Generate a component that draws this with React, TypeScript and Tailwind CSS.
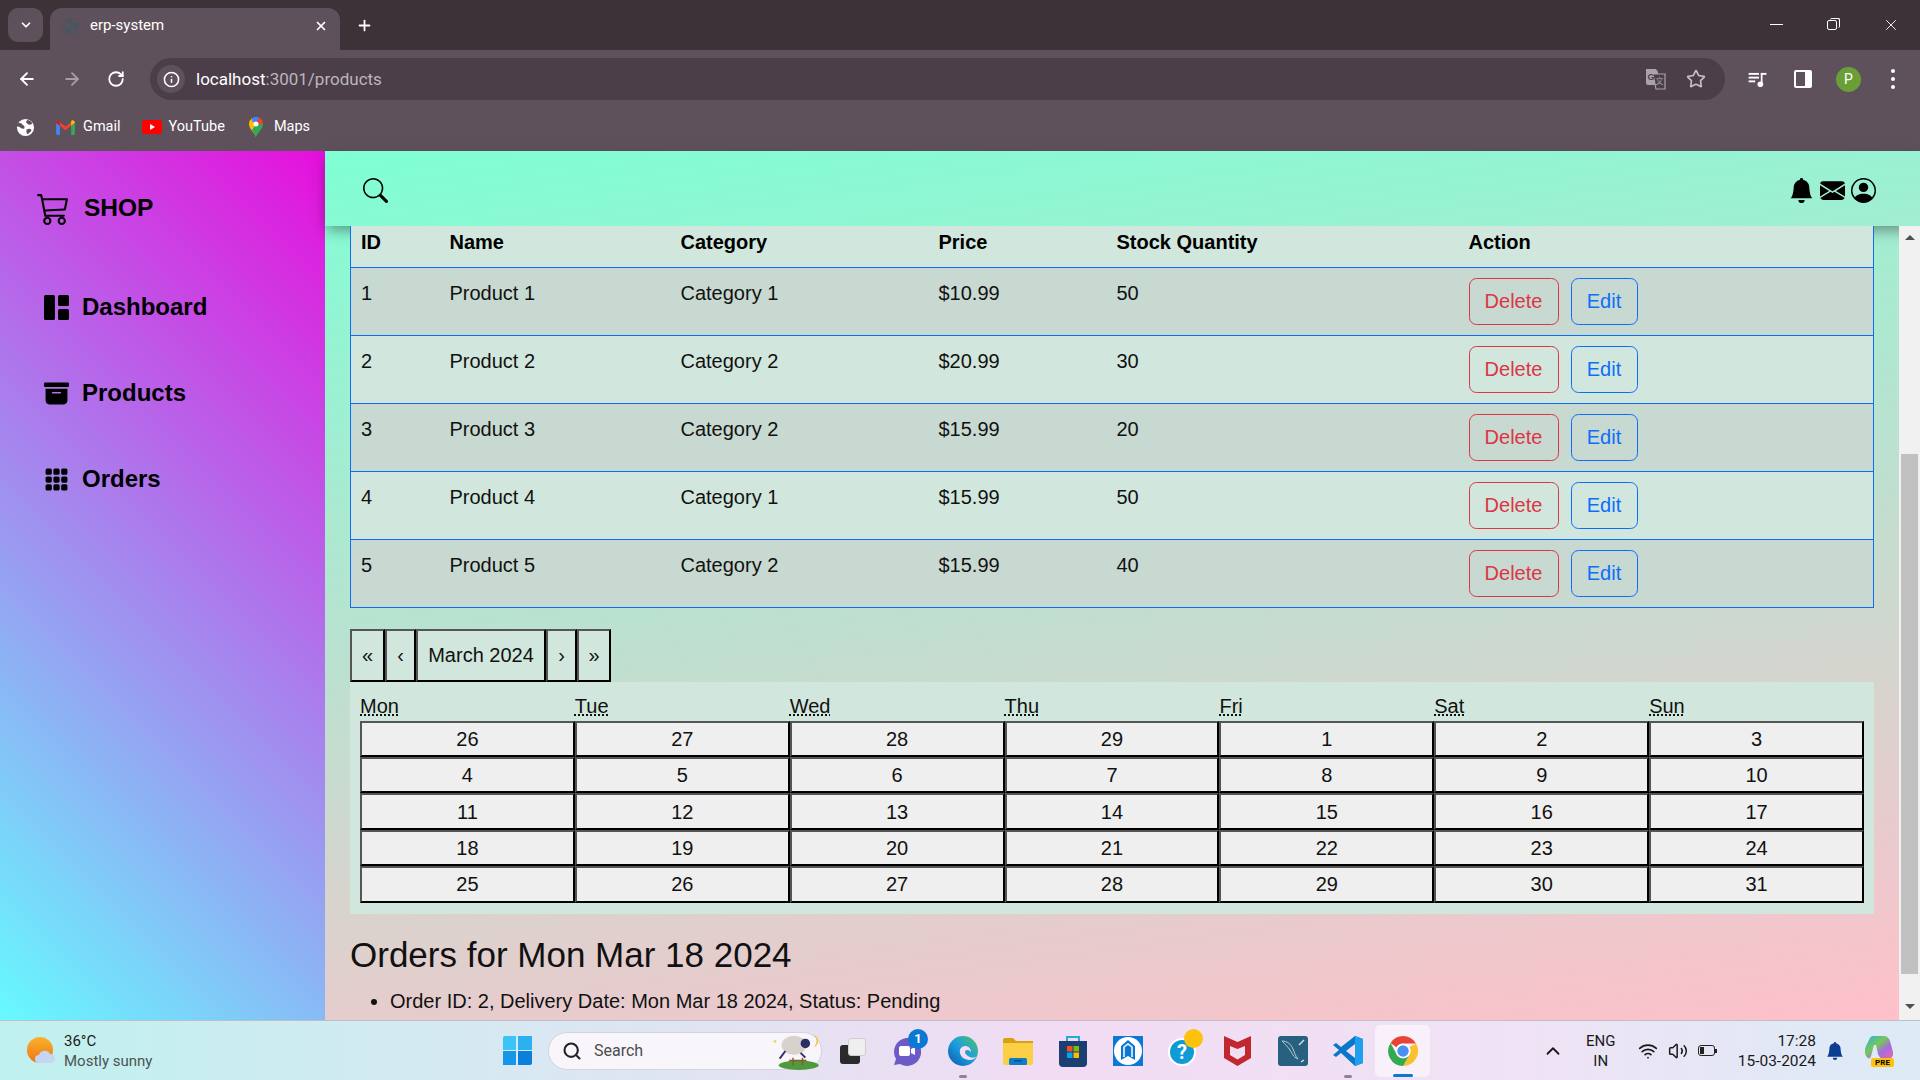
import { ArrowLeft, ArrowRight, RotateCw, Info, Star, ChevronDown, X, Plus, Search, ChevronUp, Wifi, Volume2 } from "lucide-react";
import {
  BsCart3,
  BsFillGrid1X2Fill,
  BsFillArchiveFill,
  BsFillGrid3X3GapFill,
  BsSearch,
  BsFillBellFill,
  BsFillEnvelopeFill,
  BsPersonCircle,
} from "react-icons/bs";

const products = [
  { id: 1, name: "Product 1", category: "Category 1", price: "$10.99", stock: 50 },
  { id: 2, name: "Product 2", category: "Category 2", price: "$20.99", stock: 30 },
  { id: 3, name: "Product 3", category: "Category 2", price: "$15.99", stock: 20 },
  { id: 4, name: "Product 4", category: "Category 1", price: "$15.99", stock: 50 },
  { id: 5, name: "Product 5", category: "Category 2", price: "$15.99", stock: 40 },
];

const weekdays = ["Mon", "Tue", "Wed", "Thu", "Fri", "Sat", "Sun"];
const days = [26, 27, 28, 29, 1, 2, 3, 4, 5, 6, 7, 8, 9, 10, 11, 12, 13, 14, 15, 16, 17, 18, 19, 20, 21, 22, 23, 24, 25, 26, 27, 28, 29, 30, 31];

function Globe({ className, fg, bg }: { className: string; fg: string; bg: string }) {
  return (
    <svg viewBox="0 0 20 20" className={className}>
      <circle cx="10" cy="10" r="9" fill={fg} />
      <path d="M3 5c2 0 3 1 4 2s2 1 2 3-2 1-3 1-2-2-4-2-1-3 1-4zM12 2c2 0 3 1 5 3 0 2-2 2-3 2s-2-1-3-2 0-2 1-3zM11 12c2-1 4-1 5 0s-2 4-4 5c-1-1-1-2-1-5z" fill={bg} />
    </svg>
  );
}

function GmailIcon() {
  return (
    <svg viewBox="0 0 20 16" className="w-[19px] h-[15px]">
      <path d="M0 3v11.5A1.5 1.5 0 0 0 1.500 16H4V6z" fill="#4285f4" />
      <path d="M20 3v11.5a1.500 1.500 0 0 1-1.500 1.500H16V6z" fill="#34a853" />
      <path d="M4 6v-4L10 7l6-5v4l-6 5z" fill="#ea4335" />
      <path d="M0 3c0-2.500 2.500-3.500 4-2v5z" fill="#c5221f" />
      <path d="M20 3c0-2.500-2.500-3.500-4-2v5z" fill="#fbbc04" />
    </svg>
  );
}

function YoutubeIcon() {
  return (
    <svg viewBox="0 0 20 14" className="w-[20px] h-[14px]">
      <rect width="20" height="14" rx="3" fill="#f00" />
      <path d="M8 4l5 3-5 3z" fill="#fff" />
    </svg>
  );
}

function MapsIcon() {
  return (
    <svg viewBox="0 0 14 20" className="w-[14px] h-[20px]">
      <path d="M7 20C5 15 0 12 0 7a7 7 0 0 1 3-5.800L7 7z" fill="#fbbc04" />
      <path d="M3 1.200A7 7 0 0 1 10 .6L7 7 3 4z" fill="#4285f4" />
      <path d="M10 .6A7 7 0 0 1 14 7L7 7z" fill="#ea4335" />
      <path d="M14 7c0 5-5 8-7 13L3 13l4-6z" fill="#34a853" />
      <circle cx="7" cy="7" r="2.500" fill="#fff" />
    </svg>
  );
}

function TranslateIcon() {
  return (
    <svg viewBox="0 0 21 21" className="w-[21px] h-[21px]">
      <path d="M1 0h10l2 3v13H3a2 2 0 0 1-2-2z" fill="#aaa4a8" />
      <path d="M8 5h12v15H11z" fill="#4b3e48" stroke="#aaa4a8" strokeWidth="1.200" />
      <text x="2.500" y="11" fontSize="9" fontWeight="700" fontFamily="Liberation Sans" fill="#4b3e48">G</text>
      <text x="10.500" y="15" fontSize="8" fontFamily="Noto Sans CJK SC" fill="#aaa4a8">文</text>
    </svg>
  );
}

function QueueIcon() {
  return (
    <svg viewBox="0 0 20 16" className="w-[20px] h-[15px]" fill="#fff">
      <rect x="0" y="1" width="11" height="2" />
      <rect x="0" y="5" width="11" height="2" />
      <rect x="0" y="9" width="7" height="2" />
      <rect x="13" y="1" width="1.800" height="11" />
      <rect x="13" y="1" width="6" height="2" />
      <circle cx="12.500" cy="13" r="3" />
    </svg>
  );
}

function SidePanelIcon() {
  return (
    <div className="flex w-[18px] h-[18px] rounded-[2px] border-2 border-white">
      <div className="w-[9px]" />
      <div className="flex-1 bg-white" />
    </div>
  );
}

function BrowserChrome() {
  return (
    <div className="bg-[#5f515c] text-white" style={{ fontFamily: "Roboto, sans-serif" }}>
      <div className="h-[50px] bg-[#3e3239] flex items-end pl-[8px] relative">
        <div className="w-[35px] h-[34px] mb-[8px] rounded-[10px] bg-[#5f515c] flex items-center justify-center">
          <ChevronDown size={14} strokeWidth={3} />
        </div>
        <div className="w-[290px] h-[42px] ml-[7px] rounded-t-[12px] bg-[#5f515c] flex items-center pl-[12px] pr-[12px] pb-[7px] text-[15px]">
          <Globe className="w-[18px] h-[18px]" fg="#4a5560" bg="#5f515c" />
          <span className="ml-[10px] flex-1">erp-system</span>
          <X size={14} strokeWidth={3} />
        </div>
        <div className="ml-[16px] h-[42px] pb-[7px] flex items-center">
          <Plus size={17} strokeWidth={2.500} />
        </div>
        <div className="flex-1" />
        <div className="h-[50px] flex items-center pr-[1px] pb-[1px]">
          <div className="w-[57px] flex justify-center"><div className="w-[13px] h-[1px] bg-white" /></div>
          <div className="w-[57px] flex justify-center">
            <div className="relative w-[13px] h-[13px]">
              <div className="absolute left-[3px] top-0 w-[10px] h-[10px] rounded-[2px] border border-white border-b-0 border-l-0" />
              <div className="absolute left-0 top-[2px] w-[10px] h-[10px] rounded-[2px] border border-white" />
            </div>
          </div>
          <div className="w-[57px] flex justify-center"><X size={18} strokeWidth={1.200} /></div>
        </div>
      </div>
      <div className="h-[58px] flex items-start pt-[8px] pl-[17px] pr-[14px]">
        <div className="h-[42px] w-[114px] flex items-center gap-[25px]">
          <ArrowLeft size={20} strokeWidth={2.200} />
          <ArrowRight size={20} strokeWidth={2.200} className="text-[#a69ca4]" />
          <RotateCw size={18} strokeWidth={2.400} />
        </div>
        <div className="ml-[19px] w-[1575px] h-[42px] rounded-full bg-[#4b3e48] flex items-center pl-[7px] pr-[19px]">
          <div className="w-[28px] h-[28px] rounded-full bg-[#5f515c] flex items-center justify-center">
            <Info size={17} strokeWidth={2.200} />
          </div>
          <div className="ml-[11px] pt-[1px] flex-1 text-[17px]">
            localhost<span className="text-[#bdb5bb]">:3001/products</span>
          </div>
          <TranslateIcon />
          <Star size={20} strokeWidth={2} className="ml-[20px] text-[#c5bfc3]" />
        </div>
        <div className="ml-[23px] flex items-center h-[42px]">
          <QueueIcon />
          <div className="ml-[26px]"><SidePanelIcon /></div>
          <div className="ml-[24px] w-[25px] h-[25px] rounded-full bg-[#6a9f38] flex items-center justify-center text-[14px]">P</div>
          <div className="ml-[30px] flex flex-col gap-[4px]">
            <div className="w-[4px] h-[4px] rounded-full bg-white" />
            <div className="w-[4px] h-[4px] rounded-full bg-white" />
            <div className="w-[4px] h-[4px] rounded-full bg-white" />
          </div>
        </div>
      </div>
      <div className="h-[43px] flex items-start pt-[4px] pl-[16px] text-[14.500px]">
        <div className="h-[30px] flex items-center">
          <Globe className="w-[19px] h-[19px]" fg="#fff" bg="#5f515c" />
          <div className="ml-[21px]"><GmailIcon /></div>
          <span className="ml-[8px]">Gmail</span>
          <div className="ml-[21px]"><YoutubeIcon /></div>
          <span className="ml-[7px]">YouTube</span>
          <div className="ml-[24px]"><MapsIcon /></div>
          <span className="ml-[11px]">Maps</span>
        </div>
      </div>
    </div>
  );
}

function Sidebar() {
  const items = [
    { label: "Dashboard", icon: BsFillGrid1X2Fill },
    { label: "Products", icon: BsFillArchiveFill },
    { label: "Orders", icon: BsFillGrid3X3GapFill },
  ];
  return (
    <aside className="w-[325px] shrink-0 bg-[linear-gradient(45deg,#66faff,#e60fdc)] text-black">
      <div className="flex items-center h-[30px] mt-[42px] pl-[37px]">
        <BsCart3 size={33} />
        <span className="ml-[14px] text-[24.500px] font-bold">SHOP</span>
      </div>
      <div className="mt-[41px]">
        {items.map((item) => (
          <div key={item.label} className="flex items-center h-[86px] pl-[44px]">
            <item.icon size={25} />
            <span className="ml-[13px] text-[24px] font-bold">{item.label}</span>
          </div>
        ))}
      </div>
    </aside>
  );
}

function ProductsTable() {
  return (
    <table className="relative z-10 w-full table-fixed border-collapse border border-t-0 border-[#0d6efd] bg-[#d1e7dd] text-left">
      <colgroup>
        <col className="w-[89px]" />
        <col className="w-[231px]" />
        <col className="w-[258px]" />
        <col className="w-[178px]" />
        <col className="w-[352px]" />
        <col />
      </colgroup>
      <thead>
        <tr className="h-[41px] border-b border-[#0d6efd] text-black">
          <th className="px-[10px] pt-[1px] font-bold align-top">ID</th>
          <th className="px-[10px] pt-[1px] font-bold align-top">Name</th>
          <th className="px-[10px] pt-[1px] font-bold align-top">Category</th>
          <th className="px-[10px] pt-[1px] font-bold align-top">Price</th>
          <th className="px-[10px] pt-[1px] font-bold align-top">Stock Quantity</th>
          <th className="px-[10px] pt-[1px] font-bold align-top">Action</th>
        </tr>
      </thead>
      <tbody>
        {products.map((p) => (
          <tr key={p.id} className="h-[68px] border-b border-[#0d6efd] odd:bg-[#c7d9d0]">
            <td className="p-[10px] align-top">{p.id}</td>
            <td className="p-[10px] align-top">{p.name}</td>
            <td className="p-[10px] align-top">{p.category}</td>
            <td className="p-[10px] align-top">{p.price}</td>
            <td className="p-[10px] align-top">{p.stock}</td>
            <td className="px-[10px] py-0 align-middle">
              <div className="flex gap-[12px]">
                <button className="h-[47px] w-[90px] rounded-[7.500px] border border-[#dc3545] text-[#dc3545]">Delete</button>
                <button className="h-[47px] w-[67px] rounded-[7.500px] border border-[#0d6efd] text-[#0d6efd]">Edit</button>
              </div>
            </td>
          </tr>
        ))}
      </tbody>
    </table>
  );
}

const outset = "border-2 border-t-[#555] border-l-[#555] border-r-black border-b-black";

function OrdersCalendar() {
  const nav = [
    { label: "«", w: "w-[35px]" },
    { label: "‹", w: "w-[31px]" },
    { label: "March 2024", w: "w-[130px]" },
    { label: "›", w: "w-[31px]" },
    { label: "»", w: "w-[34px]" },
  ];
  return (
    <div className="mt-[21px]">
      <div className="flex h-[53px]">
        {nav.map((n) => (
          <button key={n.label} className={`${n.w} h-[53px] bg-[#d1e7dd] ${outset}`}>
            {n.label}
          </button>
        ))}
      </div>
      <div className="bg-[#d1e7dd] pt-[9px] pb-[11px] px-[10px]">
        <div className="grid grid-cols-7 h-[30px] leading-[30px]">
          {weekdays.map((d) => (
            <div key={d}>
              <abbr className="underline decoration-dotted underline-offset-[2px]">{d}</abbr>
            </div>
          ))}
        </div>
        <div className="grid grid-cols-7 auto-rows-[36.450px]">
          {days.map((d, i) => (
            <button key={i} className={`bg-[#efefef] ${outset}`}>
              {d}
            </button>
          ))}
        </div>
      </div>
    </div>
  );
}

function Scrollbar() {
  return (
    <div className="relative z-10 w-[21px] shrink-0 bg-[#f1f1f1] flex flex-col items-center">
      <div className="mt-[9px] w-0 h-0 border-x-[5px] border-x-transparent border-b-[5px] border-b-[#505050]" />
      <div className="mt-[214px] w-[17px] h-[520px] bg-[#c1c1c1]" />
      <div className="mt-[30px] w-0 h-0 border-x-[5px] border-x-transparent border-t-[5px] border-t-[#505050]" />
    </div>
  );
}

function Content() {
  return (
    <div className="flex-1 min-w-0 flex flex-col bg-[linear-gradient(172deg,#7fffd4,#ffc0cb)] text-[20px] text-[#111]">
      <header className="relative h-[75px] shrink-0 flex items-center justify-between pt-[3px] pl-[38px] pr-[44px] shadow-[0_6px_14px_-2px_rgba(0,0,0,0.4)] text-black">
        <BsSearch size={25} />
        <div className="flex gap-[6px]">
          <BsFillBellFill size={25} />
          <BsFillEnvelopeFill size={25} />
          <BsPersonCircle size={25} />
        </div>
      </header>
      <div className="flex-1 min-h-0 flex">
        <main className="flex-1 min-w-0 overflow-hidden px-[25px]">
          <ProductsTable />
          <OrdersCalendar />
          <h3 className="mt-[20px] text-[35px] leading-[42px]">Orders for Mon Mar 18 2024</h3>
          <ul className="mt-[10px] pl-[40px] list-disc">
            <li>Order ID: 2, Delivery Date: Mon Mar 18 2024, Status: Pending</li>
          </ul>
        </main>
        <Scrollbar />
      </div>
    </div>
  );
}

function WeatherIcon() {
  return (
    <svg viewBox="0 0 28 28" className="w-[28px] h-[28px]">
      <defs>
        <linearGradient id="sun" x1="0" y1="0" x2="0" y2="1">
          <stop offset="0" stopColor="#f8b32a" />
          <stop offset="1" stopColor="#f0741a" />
        </linearGradient>
      </defs>
      <circle cx="13" cy="13" r="13" fill="url(#sun)" />
      <path d="M12 26a4 4 0 0 1 0-8 6 6 0 0 1 11-1 4.500 4.500 0 0 1 1 9z" fill="#c4d6f2" />
    </svg>
  );
}

function WindowsIcon() {
  return (
    <div className="grid grid-cols-2 gap-[1.500px] w-[29px] h-[29px]">
      <div className="bg-[#3cc4f6] rounded-tl-[2px]" />
      <div className="bg-[#2bb0f0]" />
      <div className="bg-[#1696e6]" />
      <div className="bg-[#0a80dc] rounded-br-[2px]" />
    </div>
  );
}

function SheepIcon() {
  return (
    <svg viewBox="0 0 56 40" className="w-[56px] h-[38px]">
      <ellipse cx="34" cy="35" rx="21" ry="5" fill="#4f9a3c" />
      <path d="M28 35v-8M38 35v-8M24 30h18" stroke="#8a5a30" strokeWidth="1.500" />
      <ellipse cx="29" cy="14" rx="13" ry="10" fill="#d8d2cc" />
      <circle cx="41" cy="12" r="5" fill="#2c2f64" />
      <path d="M20 20l-6 8M36 22l5 5" stroke="#2c2f64" strokeWidth="2" />
      <path d="M50 3a7 7 0 0 1 0 13 9 9 0 0 0 0-13z" fill="#f3c33c" />
      <circle cx="9" cy="10" r="1.500" fill="#f3d46c" />
    </svg>
  );
}

function TaskViewIcon() {
  return (
    <div className="relative w-[26px] h-[26px]">
      <div className="absolute left-0 bottom-0 w-[20px] h-[19px] rounded-[3px] bg-[#2a2a2a]" />
      <div className="absolute right-0 top-0 w-[18px] h-[18px] rounded-[3px] bg-[#f0eff0] border border-[#cfcdcf]" />
    </div>
  );
}

function TeamsIcon() {
  return (
    <div className="relative w-[30px] h-[30px] -ml-[3px]">
      <svg viewBox="0 0 30 30" className="w-[30px] h-[30px]">
        <path d="M15 2a14 14 0 1 1-6 26l-6 1 2-6A14 14 0 0 1 15 2z" fill="#6b5ac8" />
        <rect x="8" y="10" width="11" height="10" rx="2" fill="#fff" />
        <path d="M20 13l4-2v8l-4-2z" fill="#fff" />
      </svg>
      <div className="absolute -top-[7px] -right-[7px] w-[20px] h-[20px] rounded-full bg-[#0a78d4] text-white text-[13px] font-bold flex items-center justify-center">1</div>
    </div>
  );
}

function EdgeIcon() {
  return (
    <svg viewBox="0 0 30 30" className="w-[30px] h-[30px]">
      <defs>
        <linearGradient id="edge" x1="0" y1="1" x2="1" y2="0">
          <stop offset="0" stopColor="#0c59a4" />
          <stop offset=".5" stopColor="#1b9de2" />
          <stop offset="1" stopColor="#54c45e" />
        </linearGradient>
      </defs>
      <circle cx="15" cy="15" r="15" fill="url(#edge)" />
      <path d="M23 16c0-4-3-6-6-6s-6 3-5 7c1 5 6 7 10 7 3 0 6-2 7-4-2 2-6 2-9 0-2-1-3-3-3-4 0-2 2-2 3-2s2 1 3 2z" fill="#f3ddf2" />
    </svg>
  );
}

function FolderIcon() {
  return (
    <svg viewBox="0 0 30 28" className="w-[30px] h-[28px]">
      <path d="M0 3a2 2 0 0 1 2-2h8l3 3h17v4H0z" fill="#d9a010" />
      <path d="M0 6h30v20a2 2 0 0 1-2 2H2a2 2 0 0 1-2-2z" fill="#fbcf45" />
      <rect x="6" y="21" width="18" height="7" rx="1.500" fill="#0f7bc9" />
      <rect x="11" y="23" width="8" height="1.500" fill="#0a4f8a" />
    </svg>
  );
}

function StoreIcon() {
  return (
    <svg viewBox="0 0 30 32" className="w-[30px] h-[32px]">
      <path d="M9 6V2h12v4" fill="none" stroke="#24a9e6" strokeWidth="2" />
      <path d="M1 6h28v22a4 4 0 0 1-4 4H5a4 4 0 0 1-4-4z" fill="#1b3f72" />
      <rect x="9" y="11" width="5.500" height="5.500" fill="#f25022" />
      <rect x="15.500" y="11" width="5.500" height="5.500" fill="#7fba00" />
      <rect x="9" y="17.500" width="5.500" height="5.500" fill="#00a4ef" />
      <rect x="15.500" y="17.500" width="5.500" height="5.500" fill="#ffb900" />
    </svg>
  );
}

function BlueAppIcon() {
  return (
    <svg viewBox="0 0 30 30" className="w-[30px] h-[30px]">
      <rect width="30" height="30" fill="#0a78d4" />
      <circle cx="15" cy="15" r="14" fill="#fff" />
      <path d="M8 24V10l7-6 7 6v14l-7-4z" fill="#0a78d4" />
      <path d="M11 21V11l4-3 4 3v10" fill="none" stroke="#fff" strokeWidth="1.500" />
    </svg>
  );
}

function HelpIcon() {
  return (
    <div className="relative w-[30px] h-[30px] ml-[1px]">
      <div className="w-[28px] h-[28px] mt-[2px] rounded-full bg-[#109bd6] border-2 border-white text-white text-[20px] font-bold flex items-center justify-center">?</div>
      <div className="absolute -top-[7px] -right-[5px] w-[19px] h-[19px] rounded-full bg-[#fdc30c]" />
    </div>
  );
}

function McAfeeIcon() {
  return (
    <svg viewBox="0 0 27 30" className="w-[27px] h-[30px]">
      <path fillRule="evenodd" d="M0 0l13.500 6L27 0v22l-13.500 8L0 22zM6 10v9l7.500 4.500L21 19v-9l-7.500 3z" fill="#c1272d" />
    </svg>
  );
}

function MysqlIcon() {
  return (
    <svg viewBox="0 0 30 30" className="w-[30px] h-[30px]">
      <rect width="30" height="30" rx="3" fill="#28607f" />
      <path d="M4 5c5 0 9 3 11 8s2 6 5 10c-5-2-6-6-8-9S7 8 4 5z" fill="none" stroke="#b7ccd8" strokeWidth="1" />
      <path d="M21 9l5-5" stroke="#d5e2ea" strokeWidth="1.500" />
      <path d="M23 26l3-2" stroke="#d5e2ea" strokeWidth="1.500" />
    </svg>
  );
}

function VscodeIcon() {
  return (
    <svg viewBox="0 0 30 30" className="w-[30px] h-[30px]">
      <path d="M22 0l8 3v24l-8 3-14-13-5 4-3-2 6-5-6-5 3-2 5 4z" fill="#0a78c8" />
      <path d="M22 0l8 3v24l-8 3z" fill="#1ea0ee" />
      <path d="M22 8v14l-9-7z" fill="#f3ddf2" />
    </svg>
  );
}

function ChromeIcon() {
  return (
    <svg viewBox="0 0 30 30" className="w-[30px] h-[30px]">
      <path d="M15 0a15 15 0 0 1 13 7.500H15a7.500 7.500 0 0 0-6.500 3.750L2.500 7A15 15 0 0 1 15 0z" fill="#ea4335" />
      <path d="M28 7.500A15 15 0 0 1 15 30l6.500-11.250A7.500 7.500 0 0 0 21.500 11z" fill="#fbc02d" />
      <path d="M15 30A15 15 0 0 1 2.500 7l6 11a7.500 7.500 0 0 0 13 .750z" fill="#34a853" />
      <circle cx="15" cy="15" r="6.500" fill="#4a8ff0" stroke="#fff" strokeWidth="1.500" />
    </svg>
  );
}

function CopilotIcon() {
  return (
    <div className="relative w-[30px] h-[30px]">
      <svg viewBox="0 0 28 24" className="w-[28px] h-[24px]">
        <defs>
          <linearGradient id="cop" x1="0" y1="0" x2="1" y2="1">
            <stop offset="0" stopColor="#1fb2e8" />
            <stop offset=".4" stopColor="#78c858" />
            <stop offset=".65" stopColor="#a86ae0" />
            <stop offset="1" stopColor="#e86aa8" />
          </linearGradient>
        </defs>
        <path d="M8 0h11c3 0 5 2 6 5l3 11c1 4-2 7-5 7h-4c-3 0-5-2-6-5L11 9H9L6 20c-1 3-3 3-4 1C0 19-1 15 1 10l3-6c1-2 2-4 4-4z" fill="url(#cop)" />
      </svg>
      <div className="absolute left-[6px] bottom-[-1px] w-[23px] h-[9px] rounded-[2px] bg-[#fdc30c] text-[8px] leading-[9px] font-bold text-black text-center">PRE</div>
    </div>
  );
}

function BatteryIcon() {
  return (
    <div className="flex items-center">
      <div className="w-[17px] h-[11px] rounded-[3px] border border-[#222] p-[1px]">
        <div className="w-[4px] h-full bg-[#222]" />
      </div>
      <div className="w-[2px] h-[4px] bg-[#222]" />
    </div>
  );
}

function Taskbar() {
  const apps = [
    { key: "task", el: <TaskViewIcon /> },
    { key: "teams", el: <TeamsIcon /> },
    { key: "edge", el: <EdgeIcon />, dot: true },
    { key: "files", el: <FolderIcon /> },
    { key: "store", el: <StoreIcon /> },
    { key: "blue", el: <BlueAppIcon /> },
    { key: "help", el: <HelpIcon /> },
    { key: "mcafee", el: <McAfeeIcon /> },
    { key: "mysql", el: <MysqlIcon /> },
    { key: "vscode", el: <VscodeIcon />, dot: true },
  ];
  return (
    <footer
      className="relative h-[60px] flex items-center border-t border-[#c0bfc9] bg-[linear-gradient(90deg,#bff1ee,#d9e8f2_28%,#f2dcf3_55%,#f0e2f5_78%,#dcebf6)] text-[#1a1a1a]"
      style={{ fontFamily: "Roboto, sans-serif" }}
    >
      <div className="w-[489px] shrink-0 flex items-center pl-[27px]">
        <WeatherIcon />
        <div className="ml-[9px] text-[15px] leading-[20px]">
          <div>36°C</div>
          <div className="text-[#4c5254]">Mostly sunny</div>
        </div>
      </div>
      <div className="w-[56px] shrink-0 flex justify-center"><WindowsIcon /></div>
      <div className="ml-[3px] mr-[3px] w-[274px] h-[38px] shrink-0 rounded-full bg-[#f8f5fb] border border-[#d6d3e0] flex items-center pl-[13px]">
        <Search size={20} strokeWidth={2.500} className="text-[#222]" />
        <span className="ml-[12px] flex-1 text-[16px] text-[#4c4c4c]">Search</span>
        <SheepIcon />
      </div>
      {apps.map((a) => (
        <div key={a.key} className="relative w-[55px] h-[60px] shrink-0 flex items-center justify-center">
          {a.el}
          {a.dot && <div className="absolute bottom-[3px] w-[8px] h-[3px] rounded-full bg-[#8a8590]" />}
        </div>
      ))}
      <div className="relative w-[55px] h-[52px] shrink-0 rounded-[5px] bg-[#f9f1fa] flex items-center justify-center">
        <ChromeIcon />
        <div className="absolute bottom-0 w-[20px] h-[3px] rounded-full bg-[#0a78d4]" />
      </div>
      <div className="flex-1 flex items-center justify-end">
        <ChevronUp size={22} strokeWidth={2} />
        <div className="ml-[17px] w-[40px] text-center text-[15px] leading-[20px]">
          ENG<br />IN
        </div>
        <Wifi size={20} strokeWidth={2} className="ml-[17px]" />
        <Volume2 size={20} strokeWidth={1.800} className="ml-[10px]" />
        <div className="ml-[10px]"><BatteryIcon /></div>
        <div className="ml-[21px] text-right text-[15.500px] leading-[20px]">
          17:28<br />15-03-2024
        </div>
        <BsFillBellFill size={18} className="ml-[10px] text-[#0b3d91]" />
        <div className="ml-[21px] mr-[25px]"><CopilotIcon /></div>
      </div>
    </footer>
  );
}

export default function App() {
  return (
    <div className="w-[1920px] h-[1080px] flex flex-col overflow-hidden" style={{ fontFamily: "'Liberation Sans', Arial, sans-serif" }}>
      <BrowserChrome />
      <div className="flex-1 min-h-0 flex">
        <Sidebar />
        <Content />
      </div>
      <Taskbar />
    </div>
  );
}
